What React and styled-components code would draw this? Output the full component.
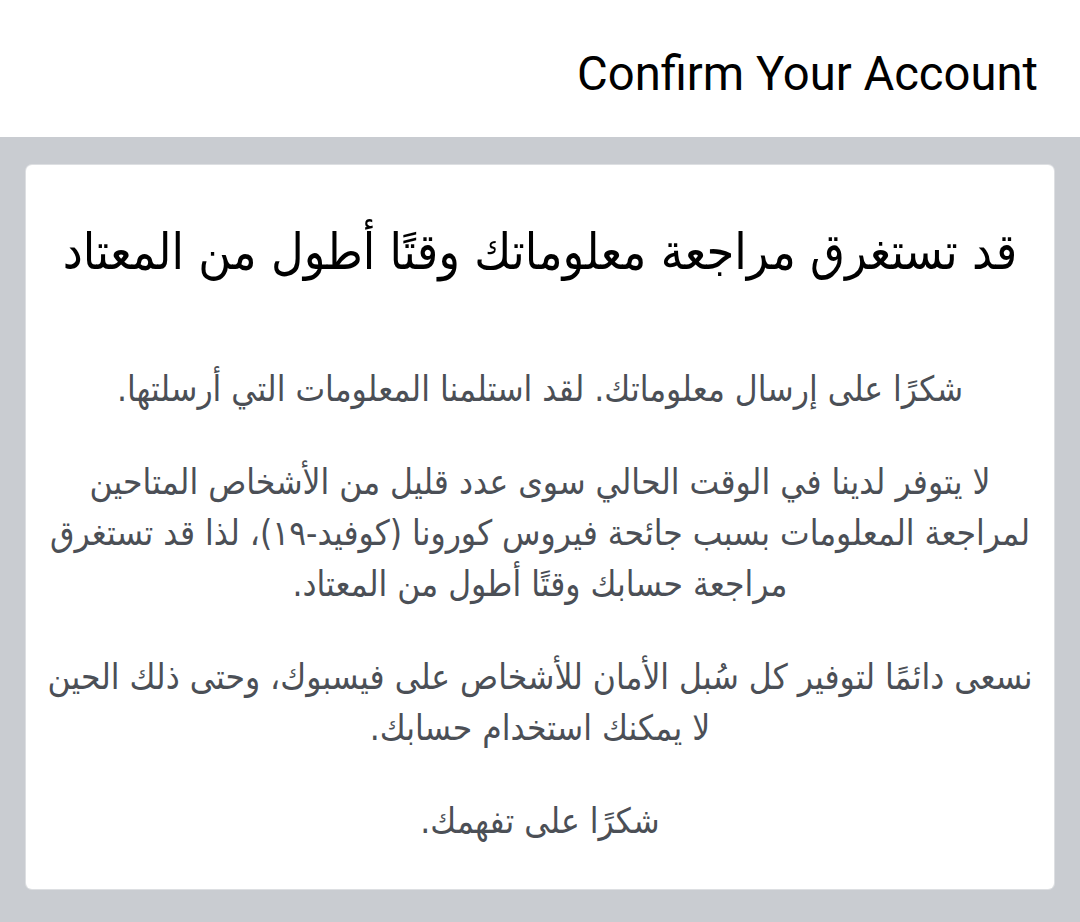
import React from 'react'
import styled, { createGlobalStyle } from 'styled-components'

const GlobalStyle = createGlobalStyle`
  html, body {
    margin: 0;
    padding: 0;
    background: #c9ccd1;
  }
`

const Page = styled.div`
  width: 1080px;
  height: 922px;
  display: flex;
  flex-direction: column;
  background: #c9ccd1;
`

const Header = styled.header`
  height: 137px;
  background: #ffffff;
  display: flex;
  align-items: center;
  justify-content: flex-end;
  padding: 0 42px 0 0;
  box-sizing: border-box;
`

const Title = styled.h1`
  margin: 10px 0 0 0;
  font-family: Roboto, "Liberation Sans", sans-serif;
  font-weight: 400;
  font-size: 47.2px;
  color: #000000;
`

const Body = styled.main`
  padding: 28px 26px 32px;
`

const Card = styled.section`
  background: #ffffff;
  border-radius: 6px;
  box-shadow: 0 0 0 1px #dddfe2;
  height: 724px;
  box-sizing: border-box;
  padding: 55px 10px 0;
  direction: rtl;
  text-align: center;
  font-family: "DejaVu Sans Condensed", "DejaVu Sans", sans-serif;
  white-space: nowrap;
`

const Heading = styled.h2`
  margin: 0 0 80px;
  font-size: 50px;
  font-weight: 400;
  line-height: 64px;
  color: #000000;
`

const Para = styled.p`
  margin: 0 0 42px;
  font-size: 35px;
  line-height: 51px;
  color: #4b4f56;
`

export default function App() {
  return (
    <Page>
      <GlobalStyle />
      <Header>
        <Title>Confirm Your Account</Title>
      </Header>
      <Body>
        <Card>
          <Heading>قد تستغرق مراجعة معلوماتك وقتًا أطول من المعتاد</Heading>
          <Para>شكرًا على إرسال معلوماتك. لقد استلمنا المعلومات التي أرسلتها.</Para>
          <Para>
            لا يتوفر لدينا في الوقت الحالي سوى عدد قليل من الأشخاص المتاحين
            <br />
            لمراجعة المعلومات بسبب جائحة فيروس كورونا (كوفيد-١٩)، لذا قد تستغرق
            <br />
            مراجعة حسابك وقتًا أطول من المعتاد.
          </Para>
          <Para>
            نسعى دائمًا لتوفير كل سُبل الأمان للأشخاص على فيسبوك، وحتى ذلك الحين
            <br />
            لا يمكنك استخدام حسابك.
          </Para>
          <Para>شكرًا على تفهمك.</Para>
        </Card>
      </Body>
    </Page>
  )
}
